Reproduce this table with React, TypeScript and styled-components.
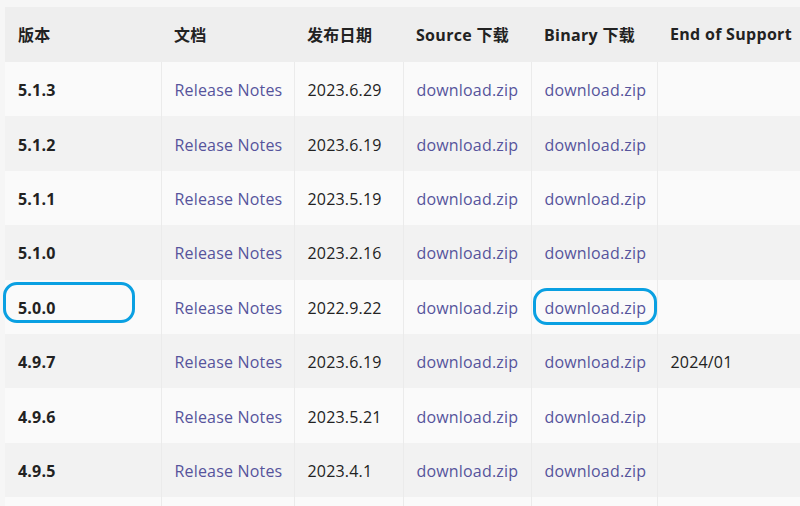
import React from "react";
import styled, { createGlobalStyle } from "styled-components";

const Global = createGlobalStyle`
  html, body { margin: 0; padding: 0; background: #f6f6f6; overflow: hidden; }
  body { font-family: "Open Sans", "Noto Sans CJK SC", sans-serif; }
`;

const Page = styled.div`
  position: relative;
  width: 800px;
  height: 506px;
  overflow: hidden;
  padding: 7px 0 0 5px;
  box-sizing: border-box;
`;

const Table = styled.table`
  border-collapse: collapse;
  table-layout: fixed;
  width: 900px;
  font-size: 16px;
  letter-spacing: 0.18px;
  color: #222;
`;

const HeadRow = styled.tr`
  background: #eeeeee;
  height: 55px;
`;

const Th = styled.th`
  text-align: left;
  font-weight: 700;
  padding: 0 0 2px 13px;
  white-space: nowrap;
  color: #222;
  letter-spacing: 0.3px;
`;

const Row = styled.tr<{ $odd: boolean }>`
  background: ${(p) => (p.$odd ? "#fafafa" : "#f2f2f2")};
  height: 54.4px;
`;

const Td = styled.td<{ $bold?: boolean }>`
  padding: 2px 0 0 13px;
  white-space: nowrap;
  border-left: 1px solid #ebebeb;
  font-weight: ${(p) => (p.$bold ? 700 : 400)};
  &:first-child { border-left: none; }
`;

const Link = styled.a`
  color: #56549c;
  text-decoration: none;
`;

const Mark = styled.div<{ $x: number; $y: number; $w: number; $h: number }>`
  position: absolute;
  left: ${(p) => p.$x}px;
  top: ${(p) => p.$y}px;
  width: ${(p) => p.$w}px;
  height: ${(p) => p.$h}px;
  border: 3px solid #0aa0e2;
  border-radius: 14px;
  box-sizing: border-box;
  pointer-events: none;
`;

const rows = [
  ["5.1.3", "2023.6.29", ""],
  ["5.1.2", "2023.6.19", ""],
  ["5.1.1", "2023.5.19", ""],
  ["5.1.0", "2023.2.16", ""],
  ["5.0.0", "2022.9.22", ""],
  ["4.9.7", "2023.6.19", "2024/01"],
  ["4.9.6", "2023.5.21", ""],
  ["4.9.5", "2023.4.1", ""],
];

export default function App() {
  return (
    <Page>
      <Global />
      <Table>
        <colgroup>
          <col style={{ width: 156 }} />
          <col style={{ width: 133 }} />
          <col style={{ width: 109 }} />
          <col style={{ width: 128 }} />
          <col style={{ width: 126 }} />
          <col style={{ width: 248 }} />
        </colgroup>
        <thead>
          <HeadRow>
            <Th>版本</Th>
            <Th>文档</Th>
            <Th>发布日期</Th>
            <Th>Source 下载</Th>
            <Th>Binary 下载</Th>
            <Th>End of Support</Th>
          </HeadRow>
        </thead>
        <tbody>
          {rows.map(([v, d, eos], i) => (
            <Row key={v} $odd={i % 2 === 0}>
              <Td $bold>{v}</Td>
              <Td><Link>Release Notes</Link></Td>
              <Td>{d}</Td>
              <Td><Link>download.zip</Link></Td>
              <Td><Link>download.zip</Link></Td>
              <Td>{eos}</Td>
            </Row>
          ))}
          <Row $odd>
            <Td $bold />
            <Td />
            <Td />
            <Td />
            <Td />
            <Td />
          </Row>
        </tbody>
      </Table>
      <Mark $x={3} $y={282} $w={132} $h={41} />
      <Mark $x={533} $y={288} $w={124} $h={37} />
    </Page>
  );
}
